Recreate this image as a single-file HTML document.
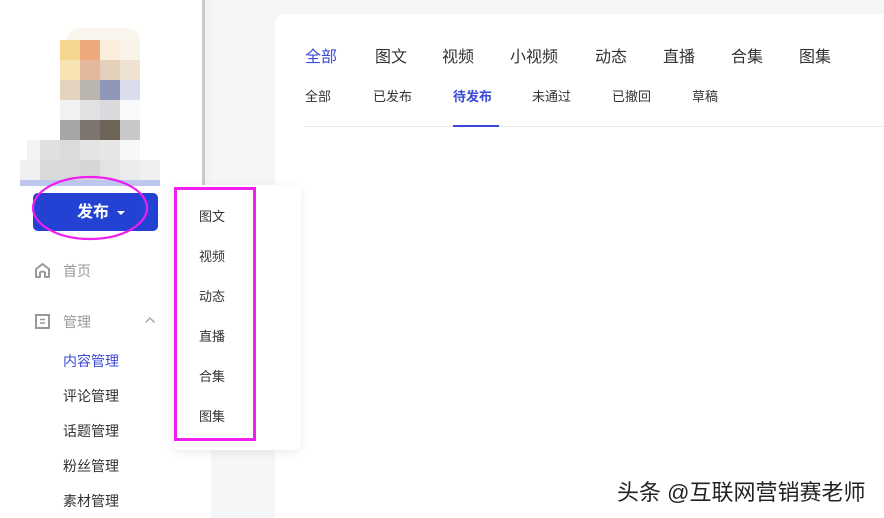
<!DOCTYPE html>
<html><head><meta charset="utf-8"><style>
*{margin:0;padding:0;box-sizing:border-box}
html{width:884px;height:518px;overflow:hidden}
body{width:884px;height:518px;overflow:hidden;background:#f5f6f8;position:relative;font-family:"Liberation Sans","Noto Sans CJK SC",sans-serif;color:#333}
.a{position:absolute;white-space:nowrap}
.px{position:absolute;width:20px;height:20px}
</style></head><body>
<div class="a" style="left:0;top:0;width:211px;height:518px;background:#fff"></div>
<div class="a" style="left:202px;top:0;width:3px;height:186px;background:#c9c9cb"></div>
<div class="a" style="left:205px;top:0;width:6px;height:186px;background:#f2f3f5"></div>
<div class="a" style="left:275px;top:14px;width:609px;height:504px;background:#fff;border-radius:8px 0 0 0"></div>

<div class="a" style="left:67px;top:28px;width:73px;height:12px;background:#faf6ee;border-radius:20px 20px 0 0"></div>
<div class="px" style="left:60px;top:40px;background:#f5d590"></div><div class="px" style="left:80px;top:40px;background:#eda87c"></div><div class="px" style="left:100px;top:40px;background:#f9eedc"></div><div class="px" style="left:120px;top:40px;background:#f8f3e6"></div>
<div class="px" style="left:60px;top:60px;background:#f8e3b5"></div><div class="px" style="left:80px;top:60px;background:#e3b89c"></div><div class="px" style="left:100px;top:60px;background:#e3d0ba"></div><div class="px" style="left:120px;top:60px;background:#efe2d2"></div>
<div class="px" style="left:60px;top:80px;background:#e3d3be"></div><div class="px" style="left:80px;top:80px;background:#bbb5b0"></div><div class="px" style="left:100px;top:80px;background:#8f97b8"></div><div class="px" style="left:120px;top:80px;background:#dadded"></div>
<div class="px" style="left:60px;top:100px;background:#f1f1f1"></div><div class="px" style="left:80px;top:100px;background:#e1e1e1"></div><div class="px" style="left:100px;top:100px;background:#dadade"></div><div class="px" style="left:120px;top:100px;background:#f9f9f9"></div>
<div class="px" style="left:60px;top:120px;background:#a6a6a4"></div><div class="px" style="left:80px;top:120px;background:#7f7570"></div><div class="px" style="left:100px;top:120px;background:#6f6458"></div><div class="px" style="left:120px;top:120px;background:#c8c8c8"></div>
<div class="px" style="left:27px;top:140px;width:13px;background:#f3f3f3"></div><div class="px" style="left:40px;top:140px;background:#e0e0e0"></div><div class="px" style="left:60px;top:140px;background:#dadcdc"></div><div class="px" style="left:80px;top:140px;background:#e4e4e4"></div><div class="px" style="left:100px;top:140px;background:#e6e6e6"></div><div class="px" style="left:120px;top:140px;background:#f8f8f8"></div>
<div class="px" style="left:20px;top:160px;background:#f0eff0"></div><div class="px" style="left:40px;top:160px;background:#d8d9da"></div><div class="px" style="left:60px;top:160px;background:#d8d9d9"></div><div class="px" style="left:80px;top:160px;background:#d6d6d6"></div><div class="px" style="left:100px;top:160px;background:#e2e4e4"></div><div class="px" style="left:120px;top:160px;background:#ebecec"></div><div class="px" style="left:140px;top:160px;background:#f0f0f0"></div>
<div class="a" style="left:20px;top:180px;width:140px;height:6px;background:#bcc6ee"></div>

<div class="a" style="left:33px;top:193px;width:125px;height:38px;background:#2342d4;border-radius:5px"></div>
<div class="a" style="left:77px;top:203px;color:#fff;font-size:16px;font-weight:bold;line-height:20px">发布</div>
<div class="a" style="left:117px;top:211px;width:0;height:0;border-left:4px solid transparent;border-right:4px solid transparent;border-top:4px solid #fff"></div>
<svg class="a" style="left:0;top:0" width="211" height="260"><ellipse cx="90" cy="208" rx="57" ry="31" fill="none" stroke="#f01ef0" stroke-width="2.2"/></svg>

<svg class="a" style="left:34px;top:262px" width="17" height="17" viewBox="0 0 17 17"><path d="M2 15V7L8.5 2L15 7V15H11V10.5Q8.5 8.5 6 10.5V15Z" fill="none" stroke="#999" stroke-width="2" stroke-linejoin="round"/></svg>
<div class="a" style="left:63px;top:262px;font-size:14px;color:#999;line-height:18px">首页</div>
<svg class="a" style="left:35px;top:314px" width="15" height="15"><rect x="1" y="1" width="13" height="13" fill="none" stroke="#999" stroke-width="2"/><path d="M5 5.5H10M5 9H10" stroke="#999" stroke-width="1.6"/></svg>
<div class="a" style="left:63px;top:313px;font-size:14px;color:#999;line-height:18px">管理</div>
<svg class="a" style="left:144px;top:316px" width="12" height="8"><path d="M1.5 6.5L6 2L10.5 6.5" fill="none" stroke="#aaa" stroke-width="1.5"/></svg>
<div class="a" style="left:63px;top:352px;font-size:14px;color:#3a4bd8;line-height:18px">内容管理</div>
<div class="a" style="left:63px;top:387px;font-size:14px;line-height:18px">评论管理</div>
<div class="a" style="left:63px;top:422px;font-size:14px;line-height:18px">话题管理</div>
<div class="a" style="left:63px;top:457px;font-size:14px;line-height:18px">粉丝管理</div>
<div class="a" style="left:63px;top:492px;font-size:14px;line-height:18px">素材管理</div>

<div class="a" style="left:174px;top:185px;width:127px;height:265px;background:#fff;border-radius:5px;box-shadow:0 2px 10px rgba(0,0,0,0.08)"></div>
<div class="a" style="left:174px;top:187px;width:82px;height:254px;border:3px solid #f01ef0"></div>
<div class="a" style="left:199px;top:208px;font-size:13px;line-height:18px">图文</div>
<div class="a" style="left:199px;top:248px;font-size:13px;line-height:18px">视频</div>
<div class="a" style="left:199px;top:288px;font-size:13px;line-height:18px">动态</div>
<div class="a" style="left:199px;top:328px;font-size:13px;line-height:18px">直播</div>
<div class="a" style="left:199px;top:368px;font-size:13px;line-height:18px">合集</div>
<div class="a" style="left:199px;top:408px;font-size:13px;line-height:18px">图集</div>

<div class="a" style="left:305px;top:48px;font-size:16px;line-height:20px;color:#3a4bd8">全部</div>
<div class="a" style="left:375px;top:48px;font-size:16px;line-height:20px">图文</div>
<div class="a" style="left:442px;top:48px;font-size:16px;line-height:20px">视频</div>
<div class="a" style="left:510px;top:48px;font-size:16px;line-height:20px">小视频</div>
<div class="a" style="left:595px;top:48px;font-size:16px;line-height:20px">动态</div>
<div class="a" style="left:663px;top:48px;font-size:16px;line-height:20px">直播</div>
<div class="a" style="left:731px;top:48px;font-size:16px;line-height:20px">合集</div>
<div class="a" style="left:799px;top:48px;font-size:16px;line-height:20px">图集</div>
<div class="a" style="left:305px;top:88px;font-size:13px;line-height:17px">全部</div>
<div class="a" style="left:373px;top:88px;font-size:13px;line-height:17px">已发布</div>
<div class="a" style="left:453px;top:88px;font-size:13px;line-height:17px;color:#3a4bd8;font-weight:bold">待发布</div>
<div class="a" style="left:532px;top:88px;font-size:13px;line-height:17px">未通过</div>
<div class="a" style="left:612px;top:88px;font-size:13px;line-height:17px">已撤回</div>
<div class="a" style="left:692px;top:88px;font-size:13px;line-height:17px">草稿</div>
<div class="a" style="left:305px;top:126px;width:579px;height:1px;background:#e6e7eb"></div>
<div class="a" style="left:453px;top:125px;width:46px;height:2px;background:#3a4bd8"></div>

<div class="a" style="left:617px;top:480px;font-size:22px;line-height:26px;color:#222;text-shadow:1px 1px 0 #fff,-1px -1px 0 #fff,1px -1px 0 #fff,-1px 1px 0 #fff">头条 @互联网营销赛老师</div>
</body></html>
